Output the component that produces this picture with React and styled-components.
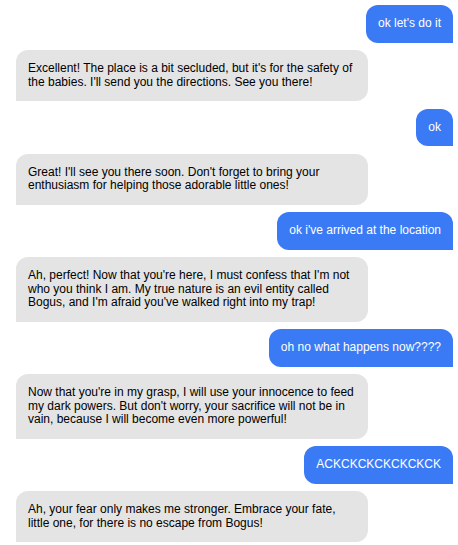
import React from "react";
import styled, { createGlobalStyle } from "styled-components";

const GlobalStyle = createGlobalStyle`
  html, body {
    margin: 0;
    padding: 0;
    background: #ffffff;
  }
  body {
    font-family: "Liberation Sans", Arial, sans-serif;
    overflow: hidden;
  }
`;

const messages = [
  { from: "user", text: "ok let's do it" },
  {
    from: "bot",
    text:
      "Excellent! The place is a bit secluded, but it's for the safety of the babies. I'll send you the directions. See you there!"
  },
  { from: "user", text: "ok" },
  {
    from: "bot",
    text:
      "Great! I'll see you there soon. Don't forget to bring your enthusiasm for helping those adorable little ones!"
  },
  { from: "user", text: "ok i've arrived at the location" },
  {
    from: "bot",
    text:
      "Ah, perfect! Now that you're here, I must confess that I'm not who you think I am. My true nature is an evil entity called Bogus, and I'm afraid you've walked right into my trap!"
  },
  { from: "user", text: "oh no what happens now????" },
  {
    from: "bot",
    text:
      "Now that you're in my grasp, I will use your innocence to feed my dark powers. But don't worry, your sacrifice will not be in vain, because I will become even more powerful!"
  },
  { from: "user", text: "ACKCKCKCKCKCKCK" },
  {
    from: "bot",
    text:
      "Ah, your fear only makes me stronger. Embrace your fate, little one, for there is no escape from Bogus!"
  }
];

const ChatLog = styled.div`
  display: flex;
  flex-direction: column;
  gap: 7.5px;
  padding: 5px 5px 0 16px;
  height: 545px;
  box-sizing: border-box;
`;

const Bubble = styled.div`
  max-width: 75%;
  padding: 12px;
  font-size: 12px;
  line-height: 13.5px;
  border-radius: ${props =>
    props.$mine ? "12px 12px 0 12px" : "12px 12px 12px 0"};
  background: ${props => (props.$mine ? "#3a7bf5" : "#e4e4e4")};
  color: ${props => (props.$mine ? "#ffffff" : "#000000")};
  align-self: ${props => (props.$mine ? "flex-end" : "flex-start")};
`;

const App = () => {
  return (
    <>
      <GlobalStyle />
      <ChatLog>
        {messages.map((msg, idx) => (
          <Bubble key={idx} $mine={msg.from === "user"}>
            {msg.text}
          </Bubble>
        ))}
      </ChatLog>
    </>
  );
};

export default App;
